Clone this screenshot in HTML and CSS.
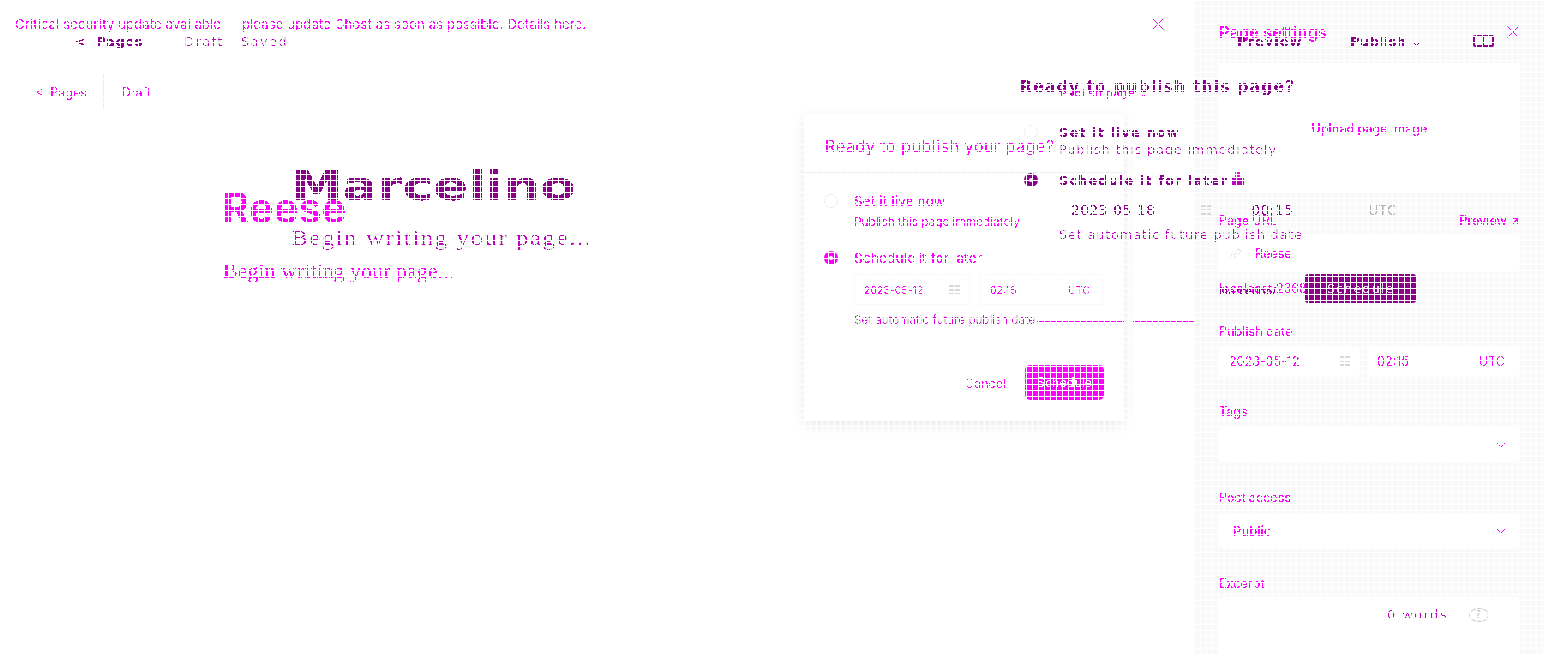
FILE: index.html
```html
<!DOCTYPE html>
<html lang="en">
<head>
  <meta charset="UTF-8" />
  <title>Page settings</title>
  <link rel="stylesheet" href="styles.css">
</head>
<body>
  <svg class="defs" width="0" height="0">
    <filter id="crisp" x="0" y="0" width="100%" height="100%" color-interpolation-filters="sRGB">
      <feComponentTransfer>
        <feFuncA type="discrete" tableValues="0 0 1 1"/>
      </feComponentTransfer>
    </filter>
    <filter id="soft" x="0" y="0" width="100%" height="100%" color-interpolation-filters="sRGB">
      <feComponentTransfer in="SourceAlpha" result="edge">
        <feFuncA type="discrete" tableValues="0 0 0 1 1 1 1 1"/>
      </feComponentTransfer>
      <feFlood flood-color="#d4d4d4"/>
      <feComposite in2="edge" operator="in" result="grey"/>
      <feComponentTransfer in="SourceGraphic" result="core">
        <feFuncA type="discrete" tableValues="0 0 0 0 0 0 1 1"/>
      </feComponentTransfer>
      <feMerge>
        <feMergeNode in="grey"/>
        <feMergeNode in="core"/>
      </feMerge>
    </filter>
  </svg>

  <div class="page">
    <main class="editor">
      <div class="banner">
        <span class="crisp">Critical security update available — please update Ghost as soon as possible. Details here.</span>
        <svg class="banner-close" width="14" height="14" viewBox="0 0 14 14"><path d="M1.5 1.5l11 11M12.5 1.5l-11 11"/></svg>
      </div>
      <div class="editor-head">
        <span class="back crisp">&lt;&nbsp; Pages</span>
        <span class="head-sep"></span>
        <span class="state crisp">Draft</span>
      </div>
      <div class="editor-body">
        <h1 class="title crisp">Reese</h1>
        <p class="begin crisp">Begin writing your page...</p>
      </div>
    </main>

    <aside class="settings">
      <div class="settings-head">
        <h3 class="crisp">Page settings</h3>
        <svg class="settings-close" width="14" height="14" viewBox="0 0 14 14"><path d="M1.5 1.5l11 11M12.5 1.5l-11 11"/></svg>
      </div>
      <div class="upload"><span class="crisp">Upload page image</span></div>

      <div class="label-row crisp"><label>Page URL</label><span>Preview ↗</span></div>
      <div class="field url-field">
        <svg class="link-icon" width="12" height="12" viewBox="0 0 12 12"><path d="M5 7l3-3M3.5 5.5l-1.5 1.5a2 2 0 0 0 3 3l1.5-1.5M6.5 3.5l1.5-1.5a2 2 0 0 1 3 3l-1.5 1.5"/></svg>
        <span class="crisp">Reese</span>
      </div>
      <p class="url-hint crisp">localhost:2368/</p>

      <label class="crisp date-label">Publish date</label>
      <div class="date-row">
        <div class="field date-field">
          <span class="crisp">2023-05-12</span>
          <span class="cal"></span>
        </div>
        <div class="field time-field">
          <span class="crisp">02:15</span>
          <span class="soft">UTC</span>
        </div>
      </div>

      <label class="crisp tags-label">Tags</label>
      <div class="field select-field tall">
        <span></span>
        <svg class="chev" width="10" height="6" viewBox="0 0 10 6"><path d="M1 1l4 4 4-4"/></svg>
      </div>

      <label class="crisp access-label">Post access</label>
      <div class="field select-field">
        <span class="crisp public">Public</span>
        <svg class="chev" width="10" height="6" viewBox="0 0 10 6"><path d="M1 1l4 4 4-4"/></svg>
      </div>

      <label class="crisp excerpt-label">Excerpt</label>
      <div class="field excerpt-field"></div>
    </aside>
  </div>

  <section class="modal">
    <h2 class="crisp">Ready to publish your page?</h2>
    <div class="modal-body">
      <div class="option">
        <span class="radio"></span>
        <div>
          <div class="opt-title crisp">Set it live now</div>
          <div class="opt-sub crisp">Publish this page immediately</div>
        </div>
      </div>
      <div class="option later">
        <span class="radio on"></span>
        <div class="opt-wide">
          <div class="opt-title crisp">Schedule it for later</div>
          <div class="when">
            <div class="when-date"><span class="crisp">2023-05-12</span><span class="cal"></span></div>
            <div class="when-time"><span class="crisp">02:15</span><span class="soft">UTC</span></div>
          </div>
          <div class="opt-sub hint soft">Set automatic future publish date</div>
        </div>
      </div>
    </div>
    <div class="modal-foot">
      <span class="cancel crisp">Cancel</span>
      <span class="schedule"><span class="crisp">Schedule</span></span>
    </div>
  </section>
  <div class="strike"></div>

  <!-- second copy of the page, offset -->
  <div class="ghost">
    <div class="ghost-nav">
      <span class="g-back crisp">&lt;&nbsp; Pages</span>
      <span class="g-state soft">Draft - Saved</span>
      <span class="g-preview crisp">Preview</span>
      <span class="g-publish crisp">Publish ⌄</span>
      <span class="g-toggle"></span>
    </div>
    <div class="ghost-body">
      <div class="g-title crisp">Marcelino</div>
      <div class="g-begin soft">Begin writing your page...</div>
    </div>

    <div class="ghost-modal">
      <h2 class="crisp">Ready to publish this page?</h2>
      <div class="g-option">
        <span class="radio"></span>
        <div>
          <div class="g-opt-title crisp">Set it live now</div>
          <div class="g-opt-sub soft">Publish this page immediately</div>
        </div>
      </div>
      <div class="g-option g-later">
        <span class="radio on"></span>
        <div class="g-wide">
          <div class="g-opt-title crisp">Schedule it for later<span class="g-lock"></span></div>
          <div class="g-when">
            <span class="crisp">2023-05-18</span>
            <span class="g-cal"></span>
            <span class="crisp">00:15</span>
            <span class="g-utc soft">UTC</span>
          </div>
          <div class="g-opt-sub soft">Set automatic future publish date</div>
        </div>
      </div>
      <div class="g-foot"><span class="g-schedule"><span class="crisp">Schedule</span></span></div>
    </div>
    <div class="g-publish-tag crisp">Publish page ⌄</div>
    <div class="g-slug crisp">Marcelino/</div>
    <div class="g-words"><span class="soft">0 words</span><span class="g-help">?</span></div>
  </div>

  <div class="mesh"></div>
</body>
</html>
```

FILE: styles.css
```css
* {
  box-sizing: border-box;
  margin: 0;
  padding: 0;
}

body {
  font-family: 'Inter', sans-serif;
  color: #f0f;
  background: #fff;
  height: 655px;
  overflow: hidden;
}

.defs {
  position: absolute;
}

.crisp {
  filter: url(#crisp);
}

.soft {
  filter: url(#soft);
}

svg path {
  fill: none;
  stroke: #f0f;
  stroke-width: 1;
}

.page {
  display: flex;
  height: 655px;
}

.editor {
  flex: 1;
}

.banner {
  display: flex;
  justify-content: space-between;
  align-items: center;
  height: 48px;
  padding: 0 29px 0 15px;
  font-size: 13px;
  letter-spacing: 0.17px;
}

.editor-head {
  display: flex;
  align-items: center;
  height: 36px;
  margin-top: 26px;
  padding-left: 35px;
  font-size: 12.5px;
}

.head-sep {
  width: 1px;
  height: 36px;
  margin: 0 18px 0 16px;
  background: #e6edf3;
}

.editor-body {
  padding: 68px 0 0 222px;
}

.title {
  font-size: 42px;
  line-height: 60px;
  font-weight: 600;
}

.begin {
  margin: 19px 0 0 1px;
  font-family: 'Liberation Serif', serif;
  font-size: 22px;
  line-height: 28px;
}

/* right panel */
.settings {
  width: 350px;
  padding: 18px 24px 0 25px;
  background: #f8f9fb;
  font-size: 12.5px;
  font-weight: 500;
}

.settings-head {
  display: flex;
  justify-content: space-between;
  align-items: center;
  height: 28px;
}

.settings-head h3 {
  font-size: 16.5px;
  font-weight: 600;
}

.upload {
  display: flex;
  align-items: center;
  justify-content: center;
  height: 129px;
  margin-top: 17px;
  padding-top: 2px;
  background: #fff;
}

.field {
  background: #fff;
  border-radius: 5px;
  display: flex;
  align-items: center;
  justify-content: space-between;
}

.label-row {
  display: flex;
  justify-content: space-between;
  margin-top: 21px;
  height: 22px;
  line-height: 16px;
}

.url-field {
  height: 37px;
  padding-left: 10px;
  justify-content: flex-start;
  gap: 14px;
}

.link-icon path {
  stroke: #d4d4d4;
}

.url-hint {
  margin-top: 9px;
  height: 16px;
  line-height: 16px;
  font-weight: 400;
}

label {
  display: block;
  line-height: 16px;
}

.date-label {
  margin-top: 27px;
}

.date-row {
  display: flex;
  gap: 8px;
  margin-top: 6px;
  font-weight: 400;
}

.date-field {
  width: 141px;
  height: 31px;
  padding: 0 9px 0 10px;
}

.time-field {
  flex: 1;
  height: 31px;
  padding: 0 15px 0 9px;
}

.cal {
  display: block;
  width: 11px;
  height: 12px;
  background: repeating-linear-gradient(#d8d8d8 0 2px, transparent 2px 4px);
}

.tags-label {
  margin-top: 27px;
}

.select-field {
  height: 36px;
  margin-top: 7px;
  padding: 0 14px;
}

.access-label {
  margin-top: 27px;
}

.public {
  font-size: 13px;
}

.excerpt-label {
  margin-top: 27px;
}

.excerpt-field {
  height: 60px;
  margin-top: 5px;
}

/* publish dialog */
.modal {
  position: absolute;
  left: 804px;
  top: 114px;
  width: 320px;
  height: 307px;
  background: #fff;
  box-shadow: 0 4px 14px rgba(0, 0, 0, 0.09);
}

.modal h2 {
  height: 58px;
  padding: 22px 0 0 21px;
  font-size: 16.5px;
  font-weight: 400;
  line-height: 20px;
  white-space: nowrap;
  letter-spacing: 0.3px;
}

.modal-body {
  height: 177px;
  padding: 21px 0 0 20px;
  border-top: 1px solid #e6edf3;
  border-bottom: 1px solid #e8e8e8;
  font-size: 11.5px;
}

.option {
  display: flex;
  gap: 16px;
}

.later {
  margin-top: 22px;
}

.radio {
  flex: none;
  width: 14px;
  height: 14px;
  border-radius: 50%;
  border: 1px solid #e8ecef;
}

.radio.on {
  border: 5px solid #f0f;
  background: #fff;
}

.opt-title {
  font-size: 13.5px;
  line-height: 14px;
  font-weight: 500;
  letter-spacing: 0.1px;
}

.opt-sub {
  margin-top: 7px;
  line-height: 14px;
  font-size: 11.8px;
}

.opt-wide {
  width: 250px;
}

.when {
  display: flex;
  gap: 10px;
  margin-top: 9px;
}

.when-date,
.when-time {
  display: flex;
  align-items: center;
  justify-content: space-between;
  height: 31px;
  border: 1px solid #f8f8f8;
  font-size: 10.5px;
  padding-top: 2px;
}

.when-date {
  width: 116px;
  padding-left: 9px;
  padding-right: 9px;
}

.when-time {
  width: 123px;
  padding-left: 9px;
  padding-right: 12px;
}

.hint {
  margin-top: 8px;
  font-size: 11.6px;
  color: #e000e0;
}

.modal-foot {
  display: flex;
  align-items: center;
  justify-content: flex-end;
  gap: 19px;
  height: 70px;
  padding: 0 20px 3px 0;
  font-size: 12.5px;
}

.cancel {
  margin-top: 1px;
}

.schedule {
  display: flex;
  align-items: center;
  justify-content: center;
  width: 79px;
  height: 35px;
  border-radius: 5px;
  background: #f0f;
  color: #fff;
}

.strike {
  position: absolute;
  left: 1037px;
  top: 321px;
  width: 157px;
  height: 1px;
  background: linear-gradient(90deg, #f0f 87px, transparent 87px 96px, #f0f 96px);
}

/* offset copy */
.ghost {
  position: absolute;
  left: 0;
  top: 0;
  width: 1544px;
  height: 655px;
  color: #8b008b;
  font-family: 'DejaVu Sans', sans-serif;
  font-size: 13px;
  pointer-events: none;
}

.ghost-nav {
  display: flex;
  align-items: center;
  height: 20px;
  margin-top: 31px;
  padding-left: 75px;
  font-weight: 700;
}

.g-back {
  width: 109px;
  letter-spacing: 0.5px;
}

.g-state {
  width: 1053px;
  font-weight: 400;
  color: #c000c0;
  letter-spacing: 1.4px;
}

.g-preview {
  width: 113px;
  letter-spacing: 1px;
}

.g-publish {
  width: 124px;
  letter-spacing: 0.3px;
}

.g-toggle {
  width: 21px;
  height: 12px;
  margin-left: -1px;
  border: 2px solid #8b008b;
  border-radius: 2px;
  background: linear-gradient(90deg, transparent 7px, #8b008b 7px 9px, transparent 9px);
}

.ghost-body {
  padding: 115px 0 0 291px;
}

.g-title {
  width: 226px;
  font-size: 40px;
  font-weight: 700;
  line-height: 40px;
  transform: scaleX(1.29);
  transform-origin: left;
}

.g-begin {
  width: 240px;
  margin-top: 20px;
  font-family: 'Liberation Serif', serif;
  font-size: 20px;
  line-height: 24px;
  letter-spacing: 1.2px;
  white-space: nowrap;
  color: #c000c0;
  transform: scaleX(1.25);
  transform-origin: left;
}

.ghost-modal {
  position: absolute;
  left: 1020px;
  top: 77px;
  width: 400px;
}

.ghost-modal h2 {
  font-size: 15.5px;
  font-weight: 700;
  line-height: 20px;
  letter-spacing: 1.2px;
  white-space: nowrap;
}

.ghost-modal .radio {
  margin-left: 4px;
  border-color: #eee;
}

.ghost-modal .radio.on {
  border-color: #8b008b;
}

.g-option {
  display: flex;
  gap: 21px;
  margin-top: 28px;
}

.g-later {
  margin-top: 15px;
}

.g-opt-title {
  display: flex;
  align-items: center;
  font-weight: 700;
  line-height: 16px;
  letter-spacing: 1.05px;
}

.g-lock {
  width: 12px;
  height: 13px;
  margin: -5px 0 0 4px;
  background: linear-gradient(#f0f 0 0) center 0 / 5px 5px no-repeat, linear-gradient(#c000c0 0 0) 0 100% / 12px 7px no-repeat;
}

.g-opt-sub {
  margin-top: 1px;
  line-height: 16px;
  font-size: 13px;
  letter-spacing: 0.75px;
  color: #c000c0;
}

.g-later .g-opt-sub {
  margin-top: 2px;
}

.g-when {
  display: flex;
  align-items: center;
  height: 30px;
  margin-top: 6px;
  padding-left: 12px;
  font-size: 13.5px;
  letter-spacing: 0.6px;
  white-space: nowrap;
}

.g-cal {
  width: 10px;
  height: 10px;
  margin: 0 40px 0 46px;
  background: repeating-linear-gradient(#d8d8d8 0 2px, transparent 2px 4px);
}

.g-utc {
  margin-left: 75px;
  color: #b0b0b0;
}

.g-foot {
  margin: 31px 0 0 285px;
}

.g-schedule {
  display: flex;
  align-items: center;
  justify-content: center;
  width: 111px;
  height: 29px;
  border-radius: 3px;
  background: #8b008b;
  color: #e6d8e6;
  letter-spacing: 1px;
}

.g-publish-tag {
  position: absolute;
  left: 1060px;
  top: 87px;
  font-size: 11px;
  color: #f0f;
  letter-spacing: 0.4px;
}

.g-slug {
  position: absolute;
  left: 1219px;
  top: 285px;
  font-size: 11px;
}

.g-words {
  position: absolute;
  left: 1387px;
  top: 607px;
  display: flex;
  align-items: center;
  gap: 21px;
  letter-spacing: 1.4px;
  color: #c000c0;
}

.g-help {
  display: flex;
  align-items: center;
  justify-content: center;
  width: 20px;
  height: 14px;
  border: 1px solid #ccc;
  border-radius: 50%;
  font-size: 10px;
  color: #bbb;
}

.mesh {
  position: fixed;
  inset: 0;
  pointer-events: none;
  background-image:
    linear-gradient(#fff 1px, transparent 1px),
    linear-gradient(90deg, #fff 1px, transparent 1px);
  background-size: 6px 6px;
}
```
